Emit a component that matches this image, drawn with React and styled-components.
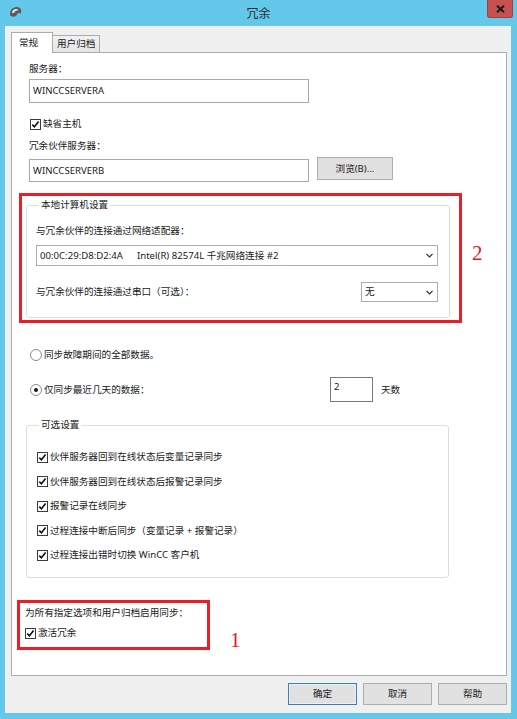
import React from 'react';
import styled, { createGlobalStyle } from 'styled-components';

const GlobalStyle = createGlobalStyle`
  html, body {
    margin: 0;
    padding: 0;
    background: #fff;
  }
  body {
    font-family: "Noto Sans", "Noto Sans CJK SC", sans-serif;
  }
`;

const Window = styled.div`
  width: 517px;
  height: 719px;
  box-sizing: border-box;
  background: #63c8e9;
  display: flex;
  flex-direction: column;
  font-size: 9.6px;
  line-height: 14px;
  color: #1a1a1a;
`;

const TitleBar = styled.div`
  height: 26px;
  flex: none;
  display: grid;
  grid-template-columns: 1fr auto 1fr;
  align-items: start;
`;

const AppIcon = styled.svg`
  margin: 6px 0 0 9px;
`;

const Title = styled.div`
  font-size: 12px;
  line-height: 14px;
  margin-top: 7px;
  color: #2b2b2b;
`;

const CloseButton = styled.div`
  justify-self: end;
  margin-right: 4px;
  width: 26px;
  height: 18px;
  box-sizing: border-box;
  background: #c75050;
  border: 1px solid #a33c3c;
  border-top: none;
  border-radius: 0 0 3px 3px;
  display: flex;
  align-items: center;
  justify-content: center;
`;

const Client = styled.div`
  flex: 1;
  margin: 0 6px 6px 5px;
  background: #f0f0f0;
  display: flex;
  flex-direction: column;
  padding: 6px 4px 8px 6px;
  min-height: 0;
`;

const TabStrip = styled.div`
  display: flex;
  align-items: flex-end;
  height: 21px;
  margin-bottom: -1px;
  position: relative;
  z-index: 1;
`;

const Tab = styled.div`
  box-sizing: border-box;
  height: ${p => (p.$active ? '21px' : '18px')};
  width: ${p => (p.$active ? '42px' : '47px')};
  padding: ${p => (p.$active ? '3px 0 0 7px' : '1px 0 0 4px')};
  background: ${p => (p.$active ? '#fff' : 'linear-gradient(#f2f2f2, #e5e5e5)')};
  border: 1px solid #acacac;
  border-bottom: ${p => (p.$active ? 'none' : '1px solid #acacac')};
  border-left: ${p => (p.$active ? '1px solid #acacac' : 'none')};
`;

const Panel = styled.div`
  flex: 1;
  background: #fff;
  border: 1px solid #acacac;
  padding: 9px 0 0 17px;
  display: flex;
  flex-direction: column;
  align-items: flex-start;
`;

const Label = styled.div`
  height: 14px;
  margin-top: ${p => p.$mt || 0}px;
  white-space: nowrap;
`;

const TextBox = styled.div`
  box-sizing: border-box;
  width: ${p => p.$w}px;
  height: ${p => p.$h}px;
  border: 1px solid ${p => p.$dark ? '#7a7a7a' : '#a9a9a9'};
  background: #fff;
  padding: ${p => p.$pad || '4px 0 0 3px'};
  margin-top: ${p => p.$mt || 0}px;
  flex: none;
`;

const CheckRow = styled.div`
  display: flex;
  align-items: center;
  gap: 2px;
  height: 14px;
  margin-top: ${p => p.$mt || 0}px;
  margin-left: 1px;
  white-space: nowrap;
`;

const Box = styled.span`
  width: 11px;
  height: 11px;
  box-sizing: border-box;
  border: 1px solid #3c3c3c;
  background: #fff;
  display: inline-flex;
  align-items: center;
  justify-content: center;
  flex: none;
`;

const RadioCircle = styled.span`
  width: 12px;
  height: 12px;
  box-sizing: border-box;
  border: 1px solid #8a8a8a;
  border-radius: 50%;
  background: #fff;
  display: inline-flex;
  align-items: center;
  justify-content: center;
  flex: none;

  &::after {
    content: '';
    width: 4px;
    height: 4px;
    border-radius: 50%;
    background: ${p => (p.$on ? '#1a1a1a' : 'transparent')};
  }
`;

const Row = styled.div`
  display: flex;
  align-items: ${p => p.$align || 'center'};
  margin-top: ${p => p.$mt || 0}px;
`;

const Button = styled.div`
  box-sizing: border-box;
  width: ${p => p.$w || 69}px;
  height: ${p => p.$h || 22}px;
  background: #e1e1e1;
  border: 1px solid ${p => (p.$default ? '#3c7fb1' : '#adadad')};
  box-shadow: ${p => (p.$default ? 'inset 0 0 0 1px #e5f1fb' : 'none')};
  display: flex;
  align-items: center;
  justify-content: center;
  flex: none;
`;

const Annotation = styled.div`
  box-sizing: border-box;
  width: ${p => p.$w}px;
  border: 3px solid #ee1c25;
  padding: ${p => p.$pad};
  margin-left: ${p => p.$ml}px;
  flex: none;
`;

const AnnotationRow = styled.div`
  display: flex;
  align-items: ${p => p.$align};
  gap: ${p => p.$gap}px;
  margin-top: ${p => p.$mt}px;
`;

const Marker = styled.div`
  font-family: "Liberation Serif", serif;
  font-size: 21px;
  line-height: 21px;
  color: #e8141f;
  margin-bottom: ${p => p.$mb || 0}px;
`;

const Group = styled.fieldset`
  box-sizing: border-box;
  width: ${p => p.$w}px;
  margin: ${p => p.$margin || 0};
  border: 1px solid #d8dfe4;
  border-radius: 3px;
  padding: ${p => p.$pad};
  min-width: 0;
  display: flex;
  flex-direction: column;
  align-items: flex-start;

  legend {
    padding: 0 2px;
    margin-left: 3px;
    line-height: 12px;
    height: 12px;
  }
`;

const Combo = styled.div`
  box-sizing: border-box;
  width: ${p => p.$w}px;
  height: ${p => p.$h}px;
  margin-top: ${p => p.$mt || 0}px;
  border: 1px solid #acacac;
  background: #fff;
  display: flex;
  align-items: center;
  padding: 0 4px 0 3px;
  white-space: pre;
  flex: none;

  span.mac {
    margin-right: 14px;
  }
  span.value {
    flex: 1;
  }
`;

const Footer = styled.div`
  display: flex;
  justify-content: flex-end;
  gap: 6px;
  margin-top: 7px;
`;

const Check = () => (
  <Box>
    <svg width="9" height="9" viewBox="0 0 9 9">
      <path d="M1.3 4.6 L3.4 6.8 L7.6 1.6" fill="none" stroke="#111" strokeWidth="1.6" />
    </svg>
  </Box>
);

const Chevron = () => (
  <svg width="7" height="5" viewBox="0 0 7 5">
    <path d="M0.5 1 L3.5 4 L6.5 1" fill="none" stroke="#333" strokeWidth="1.2" />
  </svg>
);

const CheckItem = ({ children, mt }) => (
  <CheckRow $mt={mt}>
    <Check />
    <span>{children}</span>
  </CheckRow>
);

const optional = [
  '伙伴服务器回到在线状态后变量记录同步',
  '伙伴服务器回到在线状态后报警记录同步',
  '报警记录在线同步',
  '过程连接中断后同步（变量记录 + 报警记录）',
  '过程连接出错时切换 WinCC 客户机',
];

export default function App() {
  return (
    <Window>
      <GlobalStyle />
      <TitleBar>
        <AppIcon width="13" height="12" viewBox="0 0 13 12">
          <path d="M1 9 C0.5 6 2 3 4.5 2 C6 0.8 9 0.5 11 2 C12.5 3.5 12.5 6 11.5 7.5 L9 7 L7 10 C5 11 2.5 11 1 9 Z" fill="#5a5a5a" />
          <path d="M3 7 C3 5 4.5 3.3 6.5 3 C8 2.8 9.5 3.5 10 4.5 C8 4 6 5 5 7 Z" fill="#e8e8e8" />
        </AppIcon>
        <Title>冗余</Title>
        <CloseButton>
          <svg width="9" height="8" viewBox="0 0 9 8">
            <path d="M1 0.8 L8 7.2 M8 0.8 L1 7.2" stroke="#1a1a1a" strokeWidth="2" />
          </svg>
        </CloseButton>
      </TitleBar>

      <Client>
        <TabStrip>
          <Tab $active>常规</Tab>
          <Tab>用户归档</Tab>
        </TabStrip>

        <Panel>
          <Label>服务器：</Label>
          <TextBox $w={280} $h={24} $mt={3}>WINCCSERVERA</TextBox>

          <CheckItem mt={14}>缺省主机</CheckItem>

          <Label $mt={8}>冗余伙伴服务器：</Label>
          <Row $align="flex-start" $mt={4}>
            <TextBox $w={280} $h={23} $mt={2}>WINCCSERVERB</TextBox>
            <Button $w={76} $h={23} style={{ marginLeft: 8 }}>浏览(B)...</Button>
          </Row>

          <AnnotationRow $align="center" $gap={10} $mt={11} style={{ marginLeft: -10 }}>
            <Annotation $w={443} $pad="3px 9px 2px 4px" $ml={0}>
              <Group $w={424} $pad="0 10px 15px 9px">
                <legend>本地计算机设置</legend>
                <Label $mt={13}>与冗余伙伴的连接通过网络适配器：</Label>
                <Combo $w={402} $h={21} $mt={7}>
                  <span className="mac">00:0C:29:D8:D2:4A</span>
                  <span className="value">Intel(R) 82574L 千兆网络连接 #2</span>
                  <Chevron />
                </Combo>
                <Row $mt={16} style={{ width: 402, justifyContent: 'space-between' }}>
                  <span>与冗余伙伴的连接通过串口（可选）：</span>
                  <Combo $w={77} $h={20}>
                    <span className="value">无</span>
                    <Chevron />
                  </Combo>
                </Row>
              </Group>
            </Annotation>
            <Marker $mb={10}>2</Marker>
          </AnnotationRow>

          <CheckRow $mt={25}>
            <RadioCircle />
            <span>同步故障期间的全部数据。</span>
          </CheckRow>

          <Row $mt={15}>
            <CheckRow style={{ width: 300 }}>
              <RadioCircle $on />
              <span>仅同步最近几天的数据：</span>
            </CheckRow>
            <TextBox $w={43} $h={25} $dark $pad="2px 0 0 3px">2</TextBox>
            <span style={{ marginLeft: 8 }}>天数</span>
          </Row>

          <Group $w={423} $margin="17px 0 0 -3px" $pad="0 9px 15px 9px">
            <legend>可选设置</legend>
            {optional.map((text, i) => (
              <CheckItem key={text} mt={i === 0 ? 19 : 10.5}>{text}</CheckItem>
            ))}
          </Group>

          <AnnotationRow $align="flex-end" $gap={20} $mt={22} style={{ marginLeft: -12 }}>
            <Annotation $w={193} $pad="3px 0 7px 5px" $ml={0}>
              <Label>为所有指定选项和用户归档启用同步：</Label>
              <CheckRow $mt={6} style={{ marginLeft: 0 }}>
                <Check />
                <span>激活冗余</span>
              </CheckRow>
            </Annotation>
            <Marker $mb={-1}>1</Marker>
          </AnnotationRow>
        </Panel>

        <Footer>
          <Button $default>确定</Button>
          <Button>取消</Button>
          <Button>帮助</Button>
        </Footer>
      </Client>
    </Window>
  );
}
